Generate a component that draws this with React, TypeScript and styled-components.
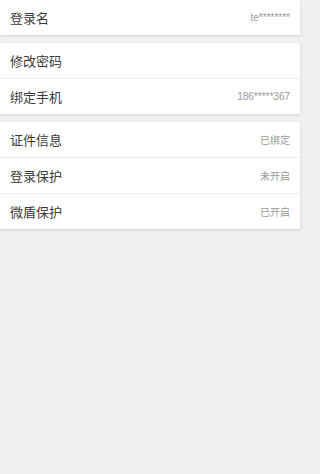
import React from "react";
import styled, { createGlobalStyle } from "styled-components";

const Global = createGlobalStyle`
  html, body { margin: 0; padding: 0; background: #f0f0f0; }
  body { font-family: "Noto Sans CJK SC", "Liberation Sans", sans-serif; }
`;

const Page = styled.div`
  width: 300px;
  min-height: 474px;
  background: #f0f0f0;
  display: flex;
  flex-direction: column;
  gap: 8px;
`;

const Group = styled.div`
  background: #fff;
  box-shadow: 0 1px 3px rgba(0, 0, 0, 0.12);
`;

const Row = styled.div<{ $divider?: boolean }>`
  height: 35px;
  display: flex;
  align-items: center;
  justify-content: space-between;
  padding: 0 10px;
  border-top: ${(p) => (p.$divider ? "1px solid #ececec" : "none")};
`;

const Label = styled.span`
  font-size: 13px;
  color: #3a3a3a;
`;

const Value = styled.span`
  font-size: 10px;
  color: #999;
  font-family: "Liberation Sans", "Noto Sans CJK SC", sans-serif;
`;

type Item = { label: string; value?: string };

const groups: Item[][] = [
  [{ label: "登录名", value: "te********" }],
  [{ label: "修改密码" }, { label: "绑定手机", value: "186*****367" }],
  [
    { label: "证件信息", value: "已绑定" },
    { label: "登录保护", value: "未开启" },
    { label: "微盾保护", value: "已开启" },
  ],
];

export default function App() {
  return (
    <>
      <Global />
      <Page>
        {groups.map((g, gi) => (
          <Group key={gi}>
            {g.map((it, i) => (
              <Row key={it.label} $divider={i > 0}>
                <Label>{it.label}</Label>
                {it.value && <Value>{it.value}</Value>}
              </Row>
            ))}
          </Group>
        ))}
      </Page>
    </>
  );
}
